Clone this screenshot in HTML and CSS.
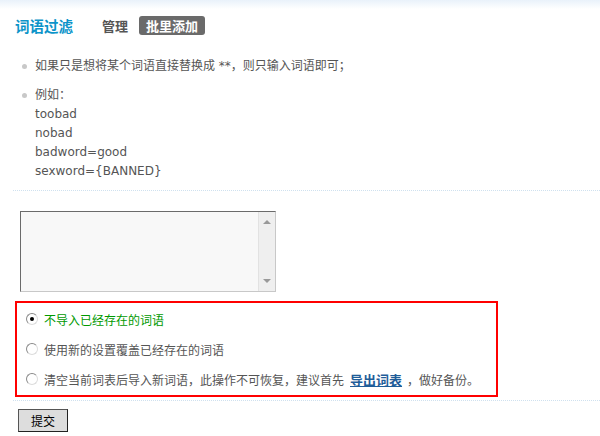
FILE: index.html
```html
<!DOCTYPE html>
<html>
<head>
<meta charset="utf-8">
<link rel="stylesheet" href="styles.css">
</head>
<body>
<div class="topband"></div>
<div class="page">
  <div class="header">
    <h1 class="title">词语过滤</h1>
    <div class="tabs">
      <a class="tab">管理</a>
      <a class="tab active">批里添加</a>
    </div>
  </div>
  <ul class="tips">
    <li>如果只是想将某个词语直接替换成 **，则只输入词语即可；</li>
    <li>例如：<br>toobad<br>nobad<br>badword=good<br>sexword={BANNED}</li>
  </ul>
  <div class="sep"></div>
  <div class="areawrap">
    <div class="textarea">
      <div class="scroll">
        <span class="arrow up"></span>
        <span class="arrow down"></span>
      </div>
    </div>
  </div>
  <div class="options">
    <label class="opt green"><span class="radio checked"></span>不导入已经存在的词语</label>
    <label class="opt"><span class="radio"></span>使用新的设置覆盖已经存在的词语</label>
    <label class="opt"><span class="radio"></span>清空当前词表后导入新词语，此操作不可恢复，建议首先 <a class="link">导出词表</a> ，做好备份。</label>
  </div>
  <div class="sep sep2"></div>
  <div class="btnrow"><button class="submit">提交</button></div>
</div>
</body>
</html>
```
FILE: styles.css
```css
html, body { margin: 0; padding: 0; background: #fff; }
body {
  font-family: "Noto Sans CJK SC", "DejaVu Sans", sans-serif;
  font-size: 12px;
  color: #555;
  position: relative;
  width: 600px;
  height: 436px;
  overflow: hidden;
}
.topband {
  position: absolute;
  left: 0; top: 0; right: 0;
  height: 9px;
  background: linear-gradient(#e9f2fa, #ffffff);
}
.page { position: relative; padding-top: 13px; }
.header { display: flex; align-items: center; height: 25px; padding-left: 15px; }
.title {
  margin: 0;
  font-size: 14.5px;
  font-weight: bold;
  color: #0c94c9;
  line-height: 20px;
  width: 87px;
}
.tabs { display: flex; align-items: center; gap: 11px; }
.tab {
  font-size: 13px;
  font-weight: bold;
  color: #555;
  line-height: 19px;
}
.tab.active {
  background: #6a6a6a;
  color: #fff;
  border-radius: 3px;
  padding: 0 7px;
}
.tips {
  list-style: none;
  margin: 19px 0 0 0;
  padding: 0 0 0 35px;
}
.tips li {
  position: relative;
  line-height: 19px;
  margin-bottom: 10px;
  font-family: "DejaVu Sans", "Noto Sans CJK SC", sans-serif;
  font-size: 12px;
}
.tips li::before {
  content: "";
  position: absolute;
  left: -13px;
  top: 7px;
  width: 5px;
  height: 5px;
  border-radius: 50%;
  background: #c8c8c8;
}
.sep {
  margin-left: 13px;
  border-top: 1px dotted #cfe1ef;
  margin-top: -1px;
}
.areawrap { padding: 20px 0 0 20px; }
.textarea {
  width: 254px;
  height: 79px;
  border-top: 1px solid #6b6b6b;
  border-left: 1px solid #6b6b6b;
  border-right: 1px solid #c8c8c8;
  border-bottom: 1px solid #c8c8c8;
  background: #f8f8f8;
  display: flex;
  justify-content: flex-end;
}
.scroll {
  width: 16px;
  background: #efefef;
  border-left: 1px solid #e2e2e2;
  position: relative;
}
.arrow {
  position: absolute;
  left: 4px;
  width: 0; height: 0;
  border-left: 4px solid transparent;
  border-right: 4px solid transparent;
}
.arrow.up { top: 8px; border-bottom: 4px solid #999; }
.arrow.down { bottom: 8px; border-top: 4px solid #999; }
.options {
  margin: 9px 0 0 15px;
  width: 479px;
  border: 2px solid #ff0000;
  padding: 1px 0 1px 0;
}
.opt {
  display: flex;
  align-items: center;
  height: 30px;
  padding-left: 9px;
  white-space: nowrap;
}
.opt.green { color: #009900; }
.radio {
  width: 10px;
  height: 10px;
  border-radius: 50%;
  border: 1px solid #8a8a8a;
  border-right-color: #dcdcdc;
  border-bottom-color: #dcdcdc;
  background: #fff;
  margin-right: 6px;
  position: relative;
  flex: none;
}
.radio.checked::after {
  content: "";
  position: absolute;
  left: 3px; top: 3px;
  width: 4px; height: 4px;
  border-radius: 50%;
  background: #000;
}
.link {
  color: #1f5d99;
  font-weight: bold;
  font-size: 13px;
  text-decoration: underline;
  margin: 0 5px 0 6px;
}
.sep2 { margin-top: 3px; margin-left: 13px; }
.btnrow { padding: 8px 0 0 18px; }
.submit {
  width: 50px;
  height: 23px;
  background: #ddd;
  border: 1px solid #222;
  border-top-color: #555;
  border-left-color: #555;
  font-family: "Noto Sans CJK SC", sans-serif;
  font-size: 12px;
  color: #000;
  padding: 0;
}
```
